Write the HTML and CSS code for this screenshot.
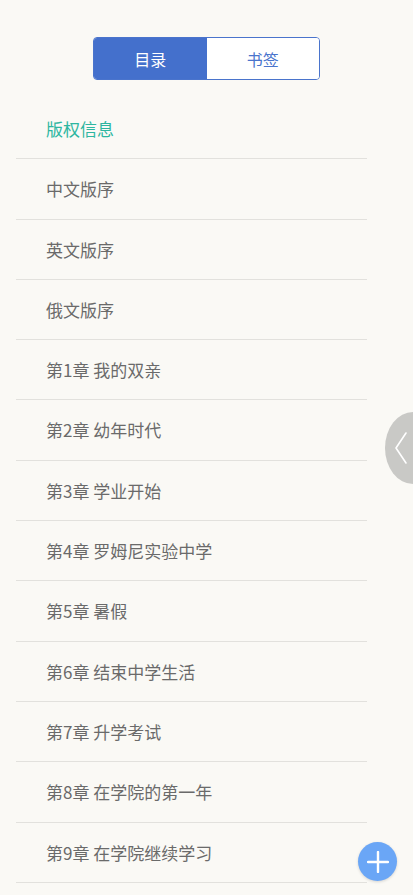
FILE: index.html
```html
<!DOCTYPE html>
<html lang="zh-CN">
<head>
    <meta charset="UTF-8">
    <meta name="viewport" content="width=device-width, initial-scale=1.0">
    <title>目录</title>
    <link rel="stylesheet" href="styles.css">
</head>
<body>

    <div class="tabs">
        <button class="tab active">目录</button>
        <button class="tab">书签</button>
    </div>

    <ul class="chapters">
        <li class="current">版权信息</li>
        <li>中文版序</li>
        <li>英文版序</li>
        <li>俄文版序</li>
        <li>第1章 我的双亲</li>
        <li>第2章 幼年时代</li>
        <li>第3章 学业开始</li>
        <li>第4章 罗姆尼实验中学</li>
        <li>第5章 暑假</li>
        <li>第6章 结束中学生活</li>
        <li>第7章 升学考试</li>
        <li>第8章 在学院的第一年</li>
        <li>第9章 在学院继续学习</li>
    </ul>

    <div class="side-handle">
        <svg width="14" height="34" viewBox="0 0 14 34">
            <polyline points="12,2 2,17 12,32" fill="none" stroke="#fff" stroke-width="1.6" stroke-linecap="round" stroke-linejoin="round"/>
        </svg>
    </div>

    <button class="fab">
        <svg width="22" height="22" viewBox="0 0 22 22">
            <path d="M11 1 V21 M1 11 H21" stroke="#fff" stroke-width="2.4" stroke-linecap="round"/>
        </svg>
    </button>

</body>
</html>
```

FILE: styles.css
```css
body {
    font-family: "Noto Sans CJK SC", "Noto Sans", sans-serif;
    background-color: #faf9f5;
    margin: 0;
    padding: 0;
    height: 895px;
    overflow: hidden;
    position: relative;
}

.tabs {
    display: flex;
    width: 227px;
    height: 43px;
    margin: 37px auto 0;
    border: 1px solid #4a74cc;
    border-radius: 4px;
    overflow: hidden;
    box-sizing: border-box;
}

.tab {
    flex: 1;
    border: none;
    background: #fff;
    color: #4a74cc;
    font-family: inherit;
    font-size: 16px;
    padding: 0;
    cursor: pointer;
}

.tab.active {
    background-color: #4470cc;
    color: #fff;
}

.chapters {
    list-style: none;
    margin: 19px 46px 0 16px;
    padding: 0;
}

.chapters li {
    height: 59.3px;
    line-height: 59px;
    padding-left: 30px;
    border-bottom: 1px solid #e2e1dd;
    font-size: 17px;
    color: #6a6a6a;
}

.chapters li.current {
    color: #2db6a0;
}

.side-handle {
    position: absolute;
    top: 412px;
    right: 0;
    width: 28px;
    height: 72px;
    border-radius: 28px 0 0 28px / 36px 0 0 36px;
    background-color: #c9c9c6;
    display: flex;
    align-items: center;
    padding-left: 9px;
    box-sizing: border-box;
}

.fab {
    position: absolute;
    left: 358px;
    top: 842px;
    width: 39px;
    height: 39px;
    border-radius: 50%;
    border: none;
    padding: 0;
    background-color: #6aa6f6;
    display: flex;
    align-items: center;
    justify-content: center;
    box-shadow: 0 1px 3px rgba(0, 0, 0, 0.15);
}
```
